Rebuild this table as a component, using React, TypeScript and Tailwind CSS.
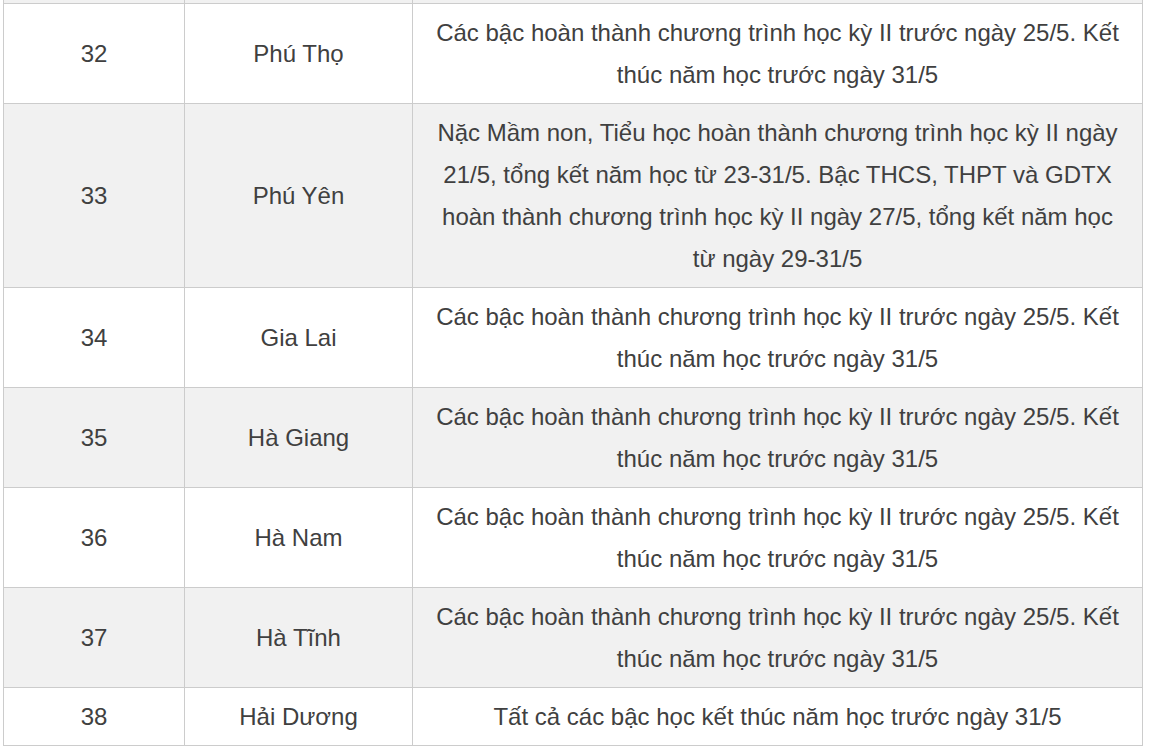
const rows: { n: string; name: string; text: string }[] = [
  { n: '32', name: 'Phú Thọ', text: 'Các bậc hoàn thành chương trình học kỳ II trước ngày 25/5. Kết thúc năm học trước ngày 31/5' },
  {
    n: '33',
    name: 'Phú Yên',
    text: 'Nặc Mầm non, Tiểu học hoàn thành chương trình học kỳ II ngày 21/5, tổng kết năm học từ 23-31/5. Bậc THCS, THPT và GDTX hoàn thành chương trình học kỳ II ngày 27/5, tổng kết năm học từ ngày 29-31/5',
  },
  { n: '34', name: 'Gia Lai', text: 'Các bậc hoàn thành chương trình học kỳ II trước ngày 25/5. Kết thúc năm học trước ngày 31/5' },
  { n: '35', name: 'Hà Giang', text: 'Các bậc hoàn thành chương trình học kỳ II trước ngày 25/5. Kết thúc năm học trước ngày 31/5' },
  { n: '36', name: 'Hà Nam', text: 'Các bậc hoàn thành chương trình học kỳ II trước ngày 25/5. Kết thúc năm học trước ngày 31/5' },
  { n: '37', name: 'Hà Tĩnh', text: 'Các bậc hoàn thành chương trình học kỳ II trước ngày 25/5. Kết thúc năm học trước ngày 31/5' },
  { n: '38', name: 'Hải Dương', text: 'Tất cả các bậc học kết thúc năm học trước ngày 31/5' },
];

export default function App() {
  return (
    <div className="w-[1149px] h-[749px] overflow-hidden bg-white pl-[3px] font-['Liberation_Sans',Arial,sans-serif] text-[#404040]">
      <table className="w-[1139px] table-fixed border-collapse text-[24px] leading-[42px]">
        <colgroup>
          <col className="w-[181px]" />
          <col className="w-[228px]" />
          <col className="w-[730px]" />
        </colgroup>
        <tbody>
          <tr className="h-[3px] bg-[#f1f1f1]">
            <td className="border-x border-[#ccc] p-0" />
            <td className="border-x border-[#ccc] p-0" />
            <td className="border-x border-[#ccc] p-0" />
          </tr>
          {rows.map((r, i) => (
            <tr key={r.n} className={i % 2 === 1 ? 'bg-[#f1f1f1]' : 'bg-white'}>
              <td className="border border-[#ccc] px-4 pt-2 pb-[7px] text-center">{r.n}</td>
              <td className="border border-[#ccc] px-4 pt-2 pb-[7px] text-center">{r.name}</td>
              <td className="border border-[#ccc] px-[22px] pt-2 pb-[7px] text-center">{r.text}</td>
            </tr>
          ))}
        </tbody>
      </table>
    </div>
  );
}
